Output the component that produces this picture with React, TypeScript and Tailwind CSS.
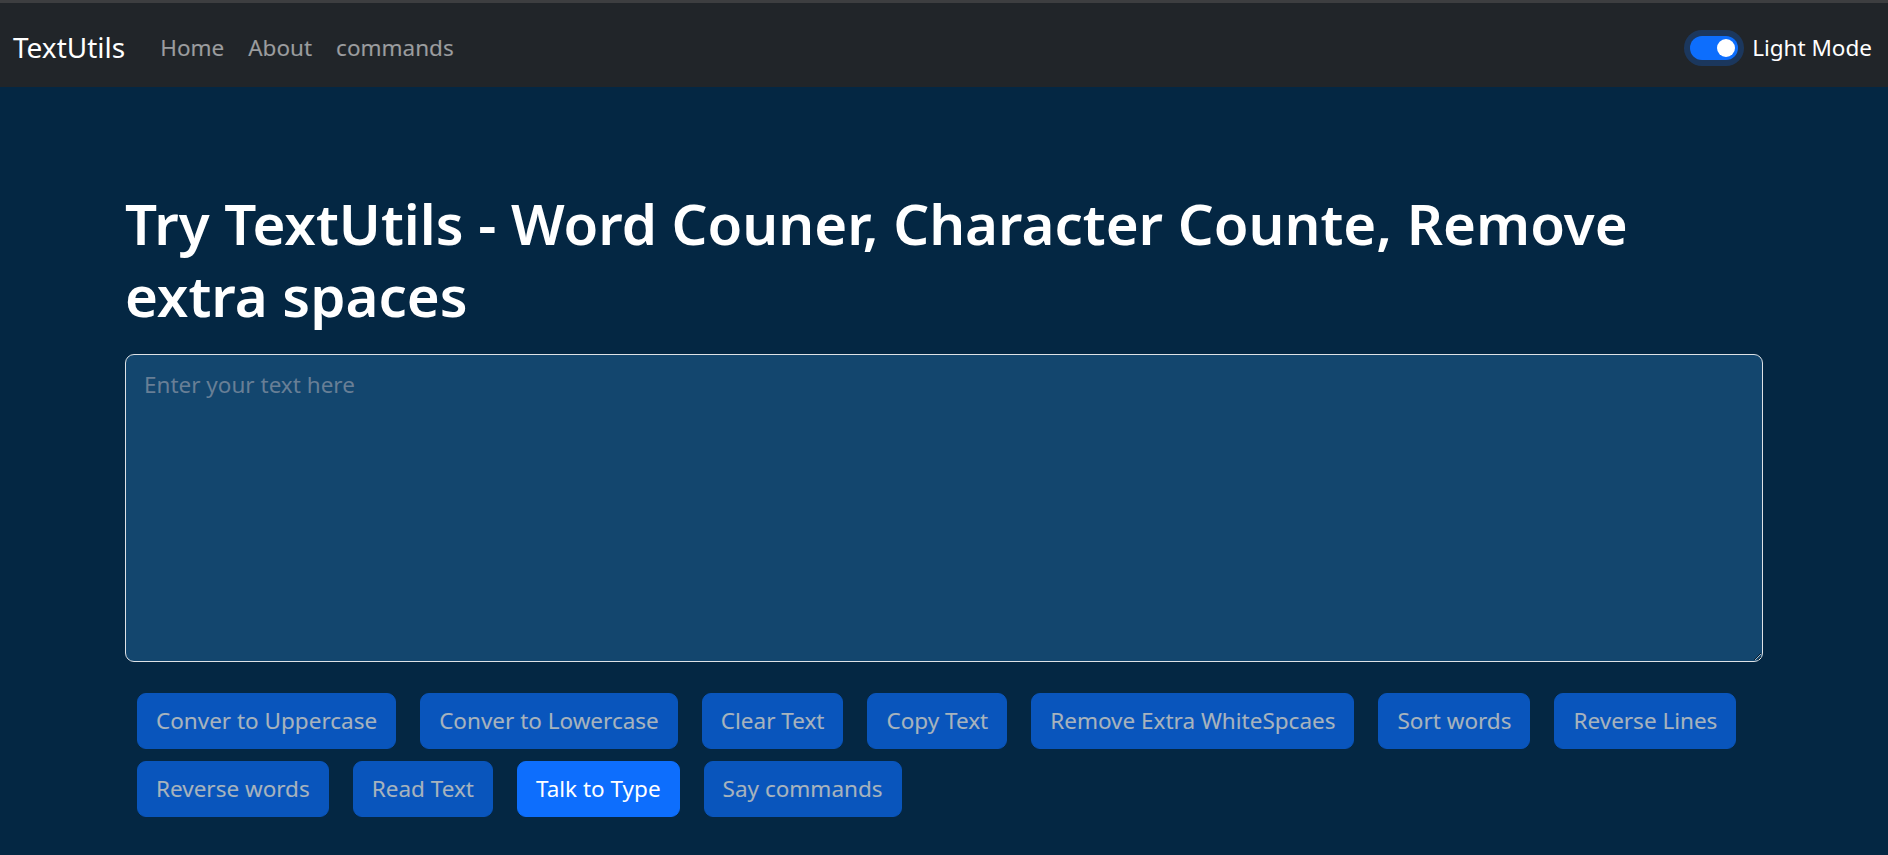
import { useState } from 'react';

const actions = [
  'Conver to Uppercase',
  'Conver to Lowercase',
  'Clear Text',
  'Copy Text',
  'Remove Extra WhiteSpcaes',
  'Sort words',
  'Reverse Lines',
  'Reverse words',
  'Read Text',
];

function Navbar() {
  return (
    <nav className="flex h-[84px] items-center bg-[#212529] px-[13px] pt-[5px]">
      <a href="#" className="mr-[23px] text-[28px] leading-[45px] text-white">
        TextUtils
      </a>
      <ul className="flex items-center">
        {['Home', 'About', 'commands'].map((link) => (
          <li key={link}>
            <a href="#" className="block px-[12px] py-[12px] text-[22.5px] leading-[36px] text-white/55">
              {link}
            </a>
          </li>
        ))}
      </ul>
      <div className="ml-auto mr-[3px] flex items-center gap-[14px]">
        <div className="flex h-[24px] w-[48px] items-center justify-end rounded-full bg-[#0d6efd] pr-[3px] shadow-[0_0_0_6px_rgba(13,110,253,0.25)]">
          <span className="h-[18px] w-[18px] rounded-full bg-white" />
        </div>
        <label className="text-[22.5px] leading-[36px] text-white">Light Mode</label>
      </div>
    </nav>
  );
}

export default function App() {
  const [text, setText] = useState('');

  return (
    <div className="min-h-screen bg-[#042743] font-['Noto_Sans','Open_Sans',sans-serif]">
      <div className="h-[3px] bg-[#3d3e40]" />
      <Navbar />

      <main className="mx-auto w-[1638px] pt-[101px]">
        <h1 className="text-[56.4px] font-semibold leading-[72px] text-white">
          Try TextUtils - Word Couner, Character Counte, Remove extra spaces
        </h1>

        <textarea
          value={text}
          onChange={(e) => setText(e.target.value)}
          placeholder="Enter your text here"
          rows={8}
          className="mt-[22px] block h-[308px] w-full rounded-[9px] border border-[#dee2e6] bg-[#13466e] px-[18px] pt-[12px] pb-[8px] text-[22.5px] leading-[36px] text-white outline-none placeholder:text-[#687f96]"
        />

        <div className="mt-[31px] flex flex-wrap gap-x-[24px] gap-y-[12px] pl-[12px]">
          {actions.map((label) => (
            <button
              key={label}
              disabled={text.length === 0}
              className="rounded-[9px] border border-[#0d6efd] bg-[#0d6efd] px-[18px] py-[9px] text-[22.5px] leading-[36px] text-white disabled:opacity-[0.65]"
            >
              {label}
            </button>
          ))}
          <button className="rounded-[9px] border border-[#0d6efd] bg-[#0d6efd] px-[18px] py-[9px] text-[22.5px] leading-[36px] text-white">
            Talk to Type
          </button>
          <button
            disabled
            className="rounded-[9px] border border-[#0d6efd] bg-[#0d6efd] px-[18px] py-[9px] text-[22.5px] leading-[36px] text-white disabled:opacity-[0.65]"
          >
            Say commands
          </button>
        </div>
      </main>
    </div>
  );
}
